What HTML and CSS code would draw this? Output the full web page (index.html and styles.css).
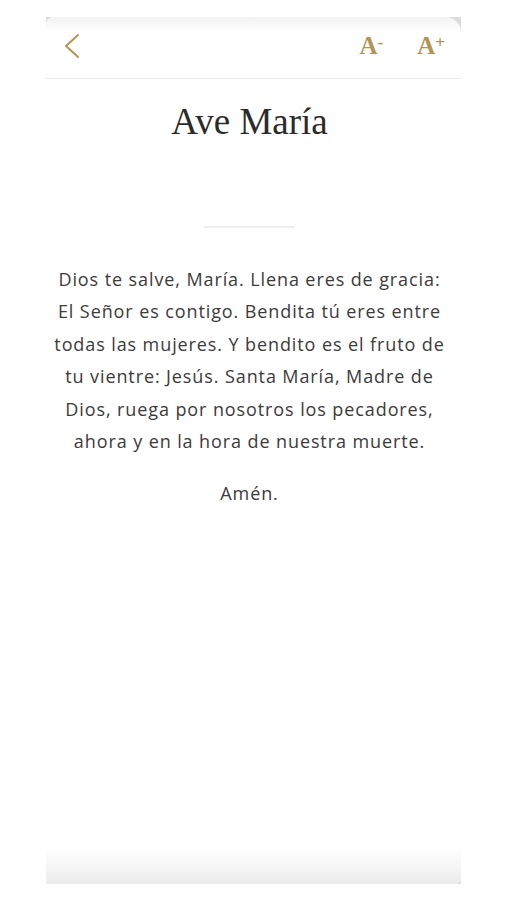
FILE: index.html
```html
<!DOCTYPE html>
<html lang="es">
<head>
    <meta charset="UTF-8">
    <meta name="viewport" content="width=device-width, initial-scale=1.0">
    <title>Ave María</title>
    <link rel="stylesheet" href="styles.css">
</head>
<body>
    <div class="device">
        <div class="screen">
            <header class="toolbar">
                <button class="back" aria-label="Volver">
                    <svg width="20" height="26" viewBox="0 0 20 26">
                        <path d="M16 2 L4 13 L16 24" fill="none" stroke="#b39453" stroke-width="2" stroke-linecap="round" stroke-linejoin="round"/>
                    </svg>
                </button>
                <div class="font-controls">
                    <button class="font-btn">A<sup>-</sup></button>
                    <button class="font-btn">A<sup>+</sup></button>
                </div>
            </header>

            <main class="prayer">
                <h1>Ave María</h1>
                <hr class="divider">
                <p>Dios te salve, María. Llena eres de gracia:<br>
                El Señor es contigo. Bendita tú eres entre<br>
                todas las mujeres. Y bendito es el fruto de<br>
                tu vientre: Jesús. Santa María, Madre de<br>
                Dios, ruega por nosotros los pecadores,<br>
                ahora y en la hora de nuestra muerte.</p>
                <p>Amén.</p>
            </main>

            <div class="bottom-fade"></div>
        </div>
    </div>
</body>
</html>
```

FILE: styles.css
```css
:root {
    --gold: #b39453;
    --text: #3b3b3b;
    --line: #e9e9e9;
}

body {
    margin: 0;
    background: #fff;
}

.device {
    width: 415px;
    height: 867px;
    margin: 17px 0 0 46px;
    background: #dcdcdc;
}

.screen {
    height: 100%;
    background: #fff;
    border-radius: 8px 16px 6px 0;
    display: flex;
    flex-direction: column;
    overflow: hidden;
}

.toolbar {
    height: 62px;
    flex-shrink: 0;
    display: flex;
    align-items: center;
    justify-content: space-between;
    padding: 0 16px 0 16px;
    border-bottom: 1px solid var(--line);
    background: linear-gradient(#f2f2f2, #fff 14px);
    box-sizing: border-box;
}

.back {
    background: none;
    border: none;
    padding: 0;
    display: flex;
    margin-top: -4px;
}

.font-controls {
    display: flex;
    gap: 34px;
    margin-top: -4px;
}

.font-btn {
    background: none;
    border: none;
    padding: 0;
    color: var(--gold);
    font-family: "Liberation Serif", serif;
    font-weight: bold;
    font-size: 25px;
    line-height: 1;
}

.font-btn sup {
    font-size: 17px;
    vertical-align: 6px;
    margin-left: 0;
}

.prayer {
    flex: 1;
    text-align: center;
    padding: 0 14px 0 6px;
}

.prayer h1 {
    font-family: "Liberation Serif", serif;
    font-weight: normal;
    font-size: 37px;
    color: #2b2b2b;
    margin: 23px 0 0;
    line-height: 40px;
}

.divider {
    width: 91px;
    border: none;
    border-top: 2px solid #eeeeee;
    margin: 84px auto 0;
}

.prayer p {
    font-family: "Open Sans", sans-serif;
    font-size: 18px;
    letter-spacing: 0.9px;
    line-height: 32.4px;
    color: var(--text);
    margin: 35px 0 0;
}

.prayer p + p {
    margin-top: 20px;
}

.bottom-fade {
    height: 36px;
    flex-shrink: 0;
    background: linear-gradient(#fff, #ececec);
}
```
